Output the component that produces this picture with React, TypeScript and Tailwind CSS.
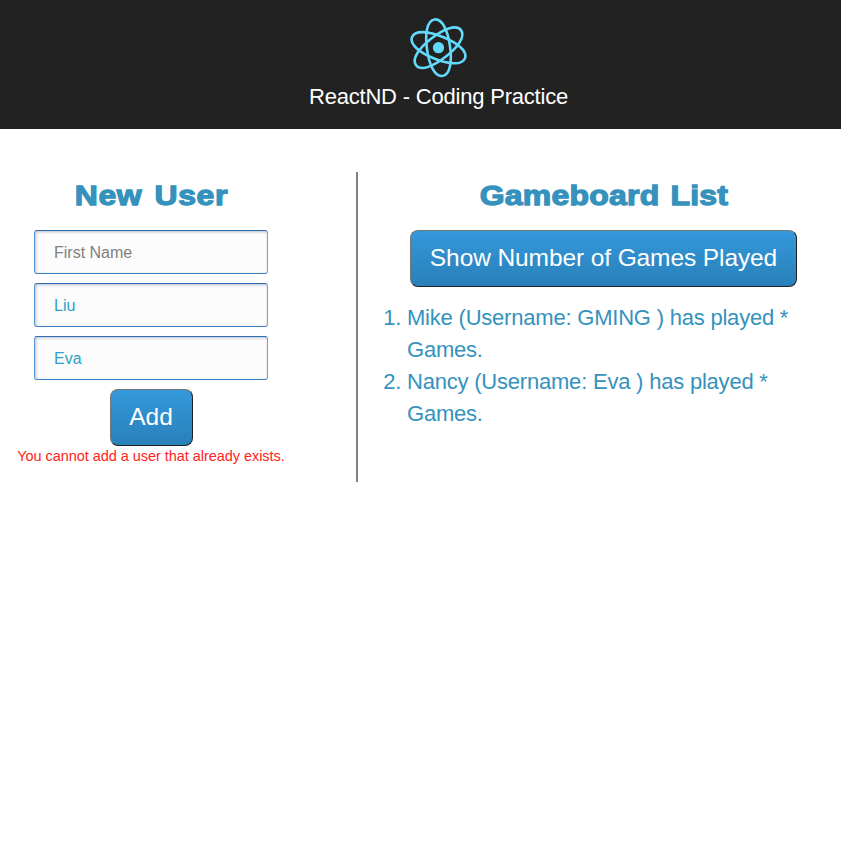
const ORBIT = "M-28.5 0 C-28.5 -8 -15 -11.6 0 -11.6 S28.5 -8 28.5 0 S15 11.6 0 11.6 S-28.5 8 -28.5 0Z";

export default function App() {
  const input = "block h-11 w-[234px] rounded-[3px] border border-t-[#2d6fae] border-b-[#3b7fc4] border-l-[#5b96d6] border-r-[#6fa5dc] bg-[#fcfcfc] px-[19px] pt-[2px] text-[16px] text-[#2e9fc6] placeholder-[#808080] shadow-[inset_1px_1px_3px_rgba(0,0,80,0.25)] outline-none";
  const btn = "h-[57px] rounded-[8px] border border-t-[#767676] border-l-[#767676] border-r-[#212121] border-b-[#212121] bg-linear-to-b from-[#3498db] to-[#2980b9] text-white text-[24.5px]";
  const heading = "mt-[4px] h-[54px] origin-top scale-x-[1.12] whitespace-nowrap text-[28.5px] leading-[39px] font-bold [-webkit-text-stroke:1.3px_#3592bd]";
  return (
    <div className="h-[841px] w-[841px] overflow-hidden bg-white font-['Liberation_Sans',Arial,sans-serif]">
      <header className="flex h-[129px] flex-col items-center bg-[#222] pl-[36px] pt-[18px] text-white">
        <svg className="h-[60px] w-[60px]" viewBox="0 0 60 60" fill="none" stroke="#61dafb" strokeWidth="2.6">
          <g transform="translate(29.5 29.7)">
            <path d={ORBIT} transform="rotate(22)" />
            <path d={ORBIT} transform="rotate(82)" />
            <path d={ORBIT} transform="rotate(142)" />
            <circle r="5.6" fill="#61dafb" stroke="none" />
          </g>
        </svg>
        <h1 className="mt-[6px] text-[22px] leading-[26px] tracking-[-0.2px]">ReactND - Coding Practice</h1>
      </header>
      <main className="mt-[43px] flex h-[310px] text-[#3592bd]">
        <section className="flex w-[302px] flex-col items-center">
          <h2 className={heading + " tracking-[0.55px] [word-spacing:2.5px]"}>New User</h2>
          <div className="flex flex-col gap-[9px]">
            <input className={input} placeholder="First Name" />
            <input className={input} defaultValue="Liu" />
            <input className={input} defaultValue="Eva" />
          </div>
          <button className={btn + " mt-[9px] w-[83px]"}>Add</button>
          <p className="mt-[1px] text-[14.5px] leading-[18px] tracking-[-0.05px] text-[#f22]">You cannot add a user that already exists.</p>
        </section>
        <section className="ml-[54px] w-[485px] border-l-2 border-[#808080]">
          <div className="flex flex-col items-center pl-[8px]">
            <h2 className={heading + " tracking-[0.25px] [word-spacing:1.5px]"}>Gameboard List</h2>
            <button className={btn + " w-[387px] tracking-[-0.1px]"}>Show Number of Games Played</button>
          </div>
          <ol className="mt-[15px] ml-[49px] w-[392px] list-decimal text-[22px] leading-8 tracking-[-0.21px]">
            <li>Mike (Username: GMING ) has played * Games.</li>
            <li>Nancy (Username: Eva ) has played * Games.</li>
          </ol>
        </section>
      </main>
    </div>
  );
}
